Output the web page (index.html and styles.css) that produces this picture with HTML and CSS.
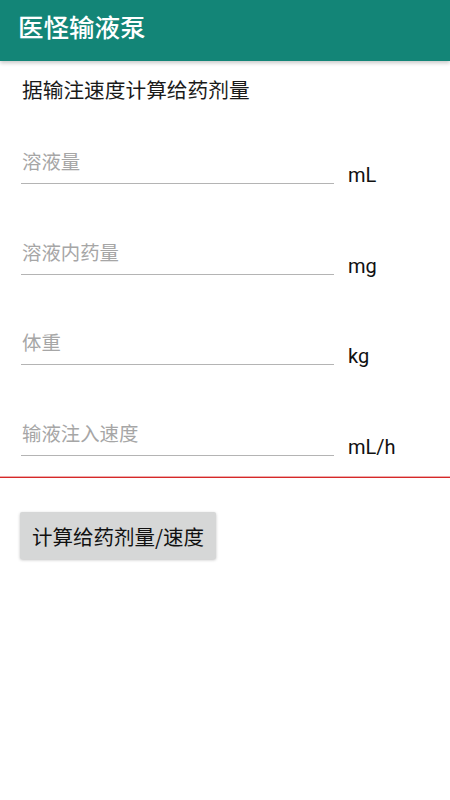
FILE: index.html
```html
<!DOCTYPE html>
<html lang="zh-CN">
<head>
<meta charset="utf-8">
<title>医怪输液泵</title>
<link rel="stylesheet" href="styles.css">
</head>
<body>
<header class="toolbar"><h1 class="title">医怪输液泵</h1></header>
<main class="content">
  <p class="subtitle">据输注速度计算给药剂量</p>
  <div class="rows">
    <div class="row">
      <div class="field"><span class="placeholder">溶液量</span></div>
      <span class="unit">mL</span>
    </div>
    <div class="row">
      <div class="field"><span class="placeholder">溶液内药量</span></div>
      <span class="unit">mg</span>
    </div>
    <div class="row">
      <div class="field"><span class="placeholder">体重</span></div>
      <span class="unit">kg</span>
    </div>
    <div class="row">
      <div class="field"><span class="placeholder">输液注入速度</span></div>
      <span class="unit">mL/h</span>
    </div>
  </div>
</main>
<div class="divider"></div>
<div class="actions">
  <button class="btn" type="button">计算给药剂量/速度</button>
</div>
</body>
</html>
```

FILE: styles.css
```css
html, body {
  margin: 0;
  padding: 0;
  background: #ffffff;
}
body {
  width: 450px;
  min-height: 800px;
  font-family: "Roboto", "Noto Sans CJK SC", sans-serif;
  color: #1a1a1a;
}
.toolbar {
  height: 61px;
  background: #138577;
  box-shadow: 0 2px 4px rgba(0,0,0,0.22);
  display: flex;
  align-items: center;
  padding-left: 18px;
  position: relative;
  z-index: 1;
}
.title {
  margin: 0;
  margin-top: -9px;
  font-family: "Noto Sans CJK SC", sans-serif;
  font-size: 25.5px;
  font-weight: 500;
  color: #ffffff;
  line-height: 30px;
}
.content {
  padding: 0 0 0 21px;
}
.subtitle {
  margin: 14px 0 0 1px;
  font-family: "Noto Sans CJK SC", sans-serif;
  font-size: 20.7px;
  line-height: 28px;
  color: #1a1a1a;
}
.rows {
  display: flex;
  flex-direction: column;
  gap: 53.5px;
  margin-top: 44px;
}
.row {
  display: flex;
  align-items: flex-end;
}
.field {
  width: 313px;
  height: 36px;
  border-bottom: 1.5px solid #b4b4b4;
  display: flex;
  align-items: flex-start;
}
.placeholder {
  font-family: "Noto Sans CJK SC", sans-serif;
  font-size: 19.4px;
  line-height: 28px;
  color: #a6a6a6;
  padding-left: 1px;
}
.unit {
  margin-left: 14px;
  font-family: "Roboto", sans-serif;
  font-size: 20px;
  line-height: 20px;
  color: #111111;
  margin-bottom: -1px;
}
.divider {
  height: 1.5px;
  background: #d62828;
  border-top: 1px solid #eeaaaa;
  margin-top: 20px;
}
.actions {
  padding: 34px 0 0 20px;
}
.btn {
  width: 196px;
  height: 47px;
  border: none;
  border-radius: 2px;
  background: #d6d7d7;
  box-shadow: 0 1px 3px rgba(0,0,0,0.25);
  font-family: "Noto Sans CJK SC", sans-serif;
  font-size: 20.5px;
  color: #111111;
  padding: 0;
}
```
